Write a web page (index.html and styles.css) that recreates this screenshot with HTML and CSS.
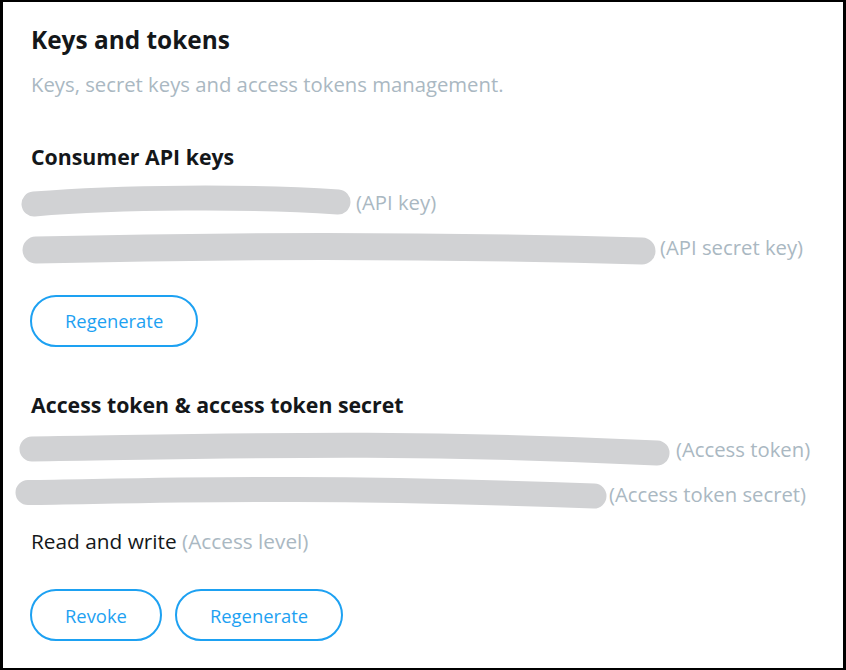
FILE: index.html
```html
<!DOCTYPE html>
<html>
<head>
<meta charset="utf-8">
<link rel="stylesheet" href="styles.css">
</head>
<body>
<div class="frame">
  <h1 class="title">Keys and tokens</h1>
  <p class="subtitle">Keys, secret keys and access tokens management.</p>

  <h2 class="section">Consumer API keys</h2>
  <div class="row">
    <span class="redact" style="width:325px">
      <svg class="scribble" width="846" height="45" viewBox="0 0 846 45"><path d="M34,24 C120,17 250,16 338,22" /></svg>
    </span>
    <span class="hint">(API key)</span>
  </div>
  <div class="row">
    <span class="redact" style="width:629px">
      <svg class="scribble thick" width="846" height="45" viewBox="0 0 846 45"><path d="M36,25 C200,21 400,19 642,26" /></svg>
    </span>
    <span class="hint">(API secret key)</span>
  </div>
  <div class="actions">
    <button class="pill">Regenerate</button>
  </div>

  <h2 class="section second">Access token &amp; access token secret</h2>
  <div class="row">
    <span class="redact" style="width:645px">
      <svg class="scribble" width="846" height="45" viewBox="0 0 846 45"><path d="M32,22 C200,20 400,13 657,26" /></svg>
    </span>
    <span class="hint">(Access token)</span>
  </div>
  <div class="row">
    <span class="redact" style="width:578px">
      <svg class="scribble" width="846" height="45" viewBox="0 0 846 45"><path d="M28,20.5 C150,19 300,13 594,24" /></svg>
    </span>
    <span class="hint">(Access token secret)</span>
  </div>
  <div class="row level">
    <span class="value">Read and write</span>&nbsp;<span class="hint">(Access level)</span>
  </div>
  <div class="actions">
    <button class="pill">Revoke</button>
    <button class="pill">Regenerate</button>
  </div>
</div>
</body>
</html>
```

FILE: styles.css
```css
html, body {
  margin: 0;
  padding: 0;
  background: #ffffff;
}
.frame {
  box-sizing: border-box;
  width: 846px;
  height: 670px;
  border-style: solid;
  border-color: #000;
  border-width: 2px 3px 2px 3px;
  padding: 0 0 0 27px;
  font-family: "Open Sans", "Noto Sans", sans-serif;
  color: #14171a;
  overflow: hidden;
}
.title {
  margin: 23px 0 0 1px;
  font-size: 24.4px;
  line-height: 30px;
  font-weight: 700;
}
.subtitle {
  margin: 14px 0 0 1px;
  font-size: 20.3px;
  line-height: 30px;
  color: #aab8c2;
}
.section {
  margin: 44px 0 0 1px;
  font-size: 21.3px;
  line-height: 28px;
  font-weight: 700;
}
.row {
  display: flex;
  align-items: center;
  height: 45px;
  padding-left: 1px;
  font-size: 20.3px;
  line-height: 45px;
}
.section + .row {
  margin-top: 8.5px;
}
.row.level {
  margin-top: 2px;
  font-size: 20.8px;
}
.redact {
  position: relative;
  display: inline-block;
  height: 45px;
  flex: none;
}
.scribble {
  position: absolute;
  left: -31px;
  top: 0;
  overflow: visible;
}
.scribble path {
  fill: none;
  stroke: #d1d2d4;
  stroke-width: 25;
  stroke-linecap: round;
}
.scribble.thick path {
  stroke-width: 27;
}
.hint {
  color: #aab8c2;
}
.value {
  color: #14171a;
}
.actions {
  display: flex;
  gap: 13px;
  margin-top: 25px;
}
.pill {
  box-sizing: border-box;
  height: 52px;
  padding: 0 33px;
  border: 2px solid #1da1f2;
  border-radius: 26px;
  background: #fff;
  color: #1da1f2;
  font-family: "Open Sans", "Noto Sans", sans-serif;
  font-size: 18.4px;
  cursor: pointer;
}
```
